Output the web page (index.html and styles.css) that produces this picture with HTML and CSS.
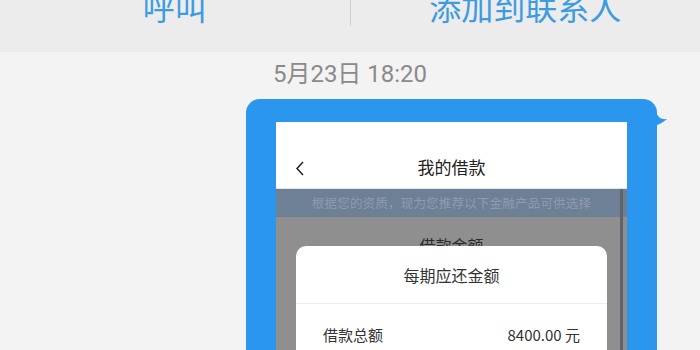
FILE: index.html
```html
<!DOCTYPE html>
<html lang="zh">
<head>
<meta charset="utf-8">
<link rel="stylesheet" href="styles.css">
</head>
<body>
<div class="page">
  <div class="topbar">
    <div class="action">呼叫</div>
    <div class="divider"></div>
    <div class="action">添加到联系人</div>
  </div>
  <div class="time">5月23日 18:20</div>
  <div class="bubble-row">
    <div class="bubble">
      <svg class="tail" width="14" height="18" viewBox="0 0 14 18"><path d="M0 0 L2 0 C2 8 6 12 13 11 C8 15 4 17 0 18 Z" fill="#2a96ee"/></svg>
      <div class="shot">
        <div class="app-header">
          <svg class="back" width="10" height="15" viewBox="0 0 10 15"><path d="M8 1 L2 7.5 L8 14" fill="none" stroke="#222" stroke-width="1.5"/></svg>
          <div class="app-title">我的借款</div>
        </div>
        <div class="notice">根据您的资质，现为您推荐以下金融产品可供选择</div>
        <div class="dim">
          <div class="dim-label">借款金额</div>
          <div class="scrollbar"></div>
          <div class="modal">
            <div class="modal-title">每期应还金额</div>
            <div class="modal-row">
              <span>借款总额</span>
              <span>8400.00 元</span>
            </div>
          </div>
        </div>
      </div>
    </div>
  </div>
</div>
</body>
</html>
```
FILE: styles.css
```css
html, body {
  margin: 0;
  padding: 0;
}
body {
  width: 700px;
  height: 350px;
  overflow: hidden;
  background: #f3f3f3;
  font-family: "Noto Sans CJK SC", "Noto Sans", sans-serif;
}
.page {
  width: 700px;
  height: 350px;
  overflow: hidden;
}
.topbar {
  height: 52px;
  background: #ececec;
  display: flex;
  align-items: flex-start;
}
.action {
  flex: 1;
  text-align: center;
  color: #3d9be2;
  font-size: 32px;
  line-height: 32px;
  margin-top: -10px;
}
.divider {
  width: 1px;
  height: 26px;
  background: #cfcfcf;
}
.time {
  text-align: center;
  color: #8a8a8a;
  font-family: Roboto, "Noto Sans CJK SC", sans-serif;
  font-size: 24px;
  line-height: 28px;
  margin-top: 8px;
  height: 28px;
}
.bubble-row {
  margin-top: 11px;
  padding-left: 246px;
}
.bubble {
  position: relative;
  width: 351px;
  background: #2a96ee;
  border-radius: 14px;
  padding: 23px 30px 0 30px;
  height: 260px;
}
.tail {
  position: absolute;
  right: -11px;
  top: 9px;
}
.shot {
  background: #fff;
  height: 240px;
}
.app-header {
  position: relative;
  height: 67px;
  display: flex;
  align-items: flex-end;
  justify-content: center;
  border-bottom: 1px solid #e6e6e6;
  box-sizing: border-box;
}
.back {
  position: absolute;
  left: 19px;
  top: 39px;
}
.app-title {
  font-size: 17px;
  line-height: 24px;
  color: #222;
  margin-bottom: 9px;
}
.notice {
  height: 28px;
  background: #6e8095;
  color: #8e9cae;
  font-size: 12.5px;
  line-height: 28px;
  text-align: center;
  letter-spacing: 0.2px;
}
.dim {
  position: relative;
  background: #8f8f8f;
  height: 160px;
  padding: 17px 20px 0 20px;
}
.dim-label {
  text-align: center;
  font-size: 16px;
  line-height: 22px;
  color: #2b2b2b;
  height: 12px;
  overflow: hidden;
}
.scrollbar {
  position: absolute;
  right: 4px;
  top: -28px;
  width: 3px;
  height: 200px;
  background: #5f6468;
}
.modal {
  background: #fff;
  border-radius: 10px;
  height: 140px;
}
.modal-title {
  height: 57px;
  border-bottom: 1px solid #ececec;
  text-align: center;
  font-size: 16px;
  line-height: 58px;
  color: #333;
}
.modal-row {
  display: flex;
  justify-content: space-between;
  padding: 20px 27px 0 27px;
  font-size: 15px;
  line-height: 22px;
  color: #333;
}
```
